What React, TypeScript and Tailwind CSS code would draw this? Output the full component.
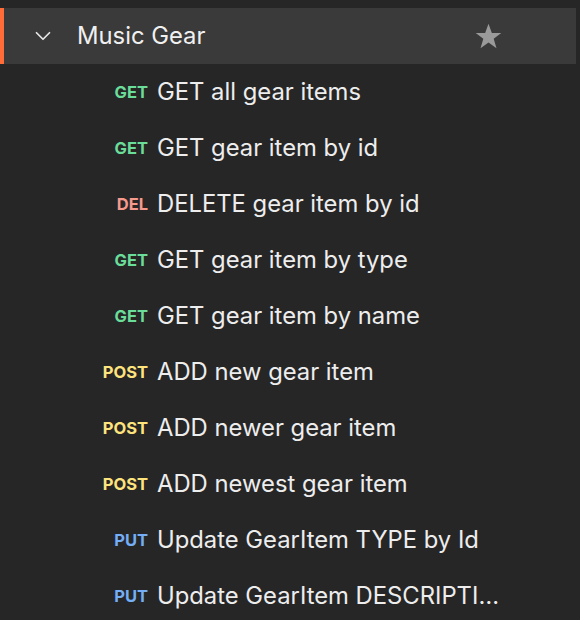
import { ChevronDown } from 'lucide-react';

type Method = 'GET' | 'DEL' | 'POST' | 'PUT';

const METHOD_COLOR: Record<Method, string> = {
  GET: 'text-[#6bdd9a]',
  DEL: 'text-[#f79a8e]',
  POST: 'text-[#ffe47e]',
  PUT: 'text-[#74aef6]',
};

const REQUESTS: { method: Method; name: string }[] = [
  { method: 'GET', name: 'GET all gear items' },
  { method: 'GET', name: 'GET gear item by id' },
  { method: 'DEL', name: 'DELETE gear item by id' },
  { method: 'GET', name: 'GET gear item by type' },
  { method: 'GET', name: 'GET gear item by name' },
  { method: 'POST', name: 'ADD new gear item' },
  { method: 'POST', name: 'ADD newer gear item' },
  { method: 'POST', name: 'ADD newest gear item' },
  { method: 'PUT', name: 'Update GearItem TYPE by Id' },
  { method: 'PUT', name: 'Update GearItem DESCRIPTION by Id' },
];

export default function App() {
  return (
    <div
      className="w-[580px] h-[620px] overflow-hidden bg-[#262626] pt-2 pr-1 text-[#ededed]"
      style={{ fontFamily: 'Inter, "Noto Sans", sans-serif' }}
    >
      {/* Collection header */}
      <div className="flex h-[56px] items-center bg-[#3a3a3a] border-l-4 border-[#ff6c37] pl-[26px] pr-[72px]">
        <ChevronDown size={26} strokeWidth={1.6} className="text-[#e6e6e6]" />
        <span className="ml-[21px] flex-1 text-[23.8px] text-[#f0f0f0]">Music Gear</span>
        <svg width="31" height="31" viewBox="0 0 24 24" className="text-[#9a9a9a]">
          <path
            fill="currentColor"
            d="M12 2.2l2.6 7.1h7.3l-5.9 4.5 2.2 7.2L12 16.6 5.8 21l2.2-7.2-5.9-4.5h7.3z"
          />
        </svg>
      </div>

      {/* Requests */}
      {REQUESTS.map((r) => (
        <div key={r.name} className="flex h-[56px] items-center">
          <span
            className={`w-[148px] shrink-0 text-right text-[16.5px] font-bold ${METHOD_COLOR[r.method]}`}
          >
            {r.method}
          </span>
          <span className="ml-[9px] w-[348px] truncate text-[23.8px] text-[#ededed]">{r.name}</span>
        </div>
      ))}
    </div>
  );
}
